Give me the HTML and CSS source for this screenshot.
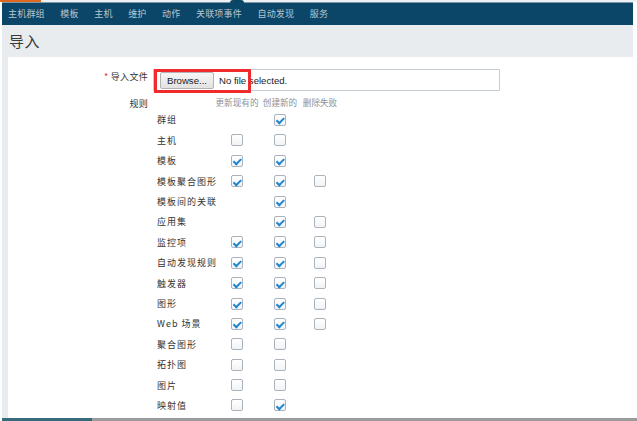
FILE: index.html
```html
<!DOCTYPE html>
<html lang="zh">
<head>
<meta charset="utf-8">
<title>导入</title>
<link rel="stylesheet" href="styles.css">
</head>
<body>
<div class="topline"><div class="accent"></div></div>
<div class="page">
  <nav class="nav">
    <span class="nav-item">主机群组</span>
    <span class="nav-item">模板</span>
    <span class="nav-item">主机</span>
    <span class="nav-item">维护</span>
    <span class="nav-item">动作</span>
    <span class="nav-item">关联项事件</span>
    <span class="nav-item">自动发现</span>
    <span class="nav-item">服务</span>
  </nav>
  <header class="titlebar"><h1 class="title">导入</h1></header>
  <main class="content">
    <div class="form">
      <div class="label label-file"><span class="req">*</span> 导入文件</div>
      <div class="field field-file">
        <div class="filebox">
          <span class="browse">Browse...</span>
          <span class="nofile">No file selected.</span>
        </div>
        <div class="highlight"></div>
      </div>
      <div class="label label-rules">规则</div>
      <div class="field">
        <div class="rules">
          <div class="rname"></div>
          <div class="colhead">更新现有的</div>
          <div class="colhead">创建新的</div>
          <div class="colhead">删除失败</div>

          <div class="rname">群组</div>
          <div class="cell"></div>
          <div class="cell"><span class="cb on"></span></div>
          <div class="cell"></div>

          <div class="rname">主机</div>
          <div class="cell"><span class="cb"></span></div>
          <div class="cell"><span class="cb"></span></div>
          <div class="cell"></div>

          <div class="rname">模板</div>
          <div class="cell"><span class="cb on"></span></div>
          <div class="cell"><span class="cb on"></span></div>
          <div class="cell"></div>

          <div class="rname">模板聚合图形</div>
          <div class="cell"><span class="cb on"></span></div>
          <div class="cell"><span class="cb on"></span></div>
          <div class="cell"><span class="cb"></span></div>

          <div class="rname">模板间的关联</div>
          <div class="cell"></div>
          <div class="cell"><span class="cb on"></span></div>
          <div class="cell"></div>

          <div class="rname">应用集</div>
          <div class="cell"></div>
          <div class="cell"><span class="cb on"></span></div>
          <div class="cell"><span class="cb"></span></div>

          <div class="rname">监控项</div>
          <div class="cell"><span class="cb on"></span></div>
          <div class="cell"><span class="cb on"></span></div>
          <div class="cell"><span class="cb"></span></div>

          <div class="rname">自动发现规则</div>
          <div class="cell"><span class="cb on"></span></div>
          <div class="cell"><span class="cb on"></span></div>
          <div class="cell"><span class="cb"></span></div>

          <div class="rname">触发器</div>
          <div class="cell"><span class="cb on"></span></div>
          <div class="cell"><span class="cb on"></span></div>
          <div class="cell"><span class="cb"></span></div>

          <div class="rname">图形</div>
          <div class="cell"><span class="cb on"></span></div>
          <div class="cell"><span class="cb on"></span></div>
          <div class="cell"><span class="cb"></span></div>

          <div class="rname">Web 场景</div>
          <div class="cell"><span class="cb on"></span></div>
          <div class="cell"><span class="cb on"></span></div>
          <div class="cell"><span class="cb"></span></div>

          <div class="rname">聚合图形</div>
          <div class="cell"><span class="cb"></span></div>
          <div class="cell"><span class="cb"></span></div>
          <div class="cell"></div>

          <div class="rname">拓扑图</div>
          <div class="cell"><span class="cb"></span></div>
          <div class="cell"><span class="cb"></span></div>
          <div class="cell"></div>

          <div class="rname">图片</div>
          <div class="cell"><span class="cb"></span></div>
          <div class="cell"><span class="cb"></span></div>
          <div class="cell"></div>

          <div class="rname">映射值</div>
          <div class="cell"><span class="cb"></span></div>
          <div class="cell"><span class="cb on"></span></div>
          <div class="cell"></div>
        </div>
      </div>
    </div>
  </main>
  <div class="scrollbar"><div class="thumb"></div></div>
</div>
</body>
</html>
```
FILE: styles.css
```css
* { box-sizing: border-box; }
html, body { margin: 0; padding: 0; background: #ffffff; }
body {
  width: 637px;
  height: 421px;
  overflow: hidden;
  font-family: "Noto Sans CJK SC", "Liberation Sans", sans-serif;
  color: #333;
}
.topline {
  height: 2px;
  background: #eef1f3;
}
.topline .accent {
  width: 41px;
  height: 2px;
  background: #e0671f;
}
.page {
  margin-left: 2px;
}
.nav {
  position: relative;
  width: 631px;
  height: 23px;
  background: #0b4567;
  border-top: 1px solid #7f98a8;
  display: flex;
  align-items: center;
  gap: 15.5px;
  padding-left: 6px;
}
.nav::before {
  content: "";
  position: absolute;
  left: 228px;
  top: -3px;
  width: 14px;
  height: 3px;
  background: #0b4567;
  border-radius: 3px 3px 0 0;
}
.nav-item {
  font-size: 9px;
  line-height: 12px;
  color: #b8c6d0;
  letter-spacing: 0.2px;
}
.titlebar {
  width: 631px;
  height: 32px;
  background: #e8ecef;
  display: flex;
  align-items: center;
  padding-left: 7px;
}
.title {
  margin: 0;
  font-size: 15px;
  font-weight: normal;
  color: #3a3a3a;
  letter-spacing: 0.5px;
  line-height: 18px;
}
.content {
  height: 361px;
  border-left: 6px solid #e8ecef;
  background: #fff;
  padding-top: 12px;
  overflow: hidden;
}
.form {
  display: grid;
  grid-template-columns: 140px 1fr;
  column-gap: 5px;
  row-gap: 5px;
}
.label {
  text-align: right;
  font-size: 9px;
  color: #333;
  letter-spacing: 0.3px;
}
.label-file { padding-top: 2px; line-height: 12px; }
.label-rules { padding-top: 1px; line-height: 13px; }
.req { color: #e23030; }
.field { position: relative; }
.filebox {
  width: 347px;
  height: 22px;
  border: 1px solid #c5ccd2;
  display: flex;
  align-items: center;
  padding-left: 6px;
  gap: 5px;
  font-family: "Liberation Sans", Arial, sans-serif;
}
.browse {
  width: 54px;
  height: 17px;
  border: 1px solid #b3b3b3;
  border-radius: 2px;
  background: linear-gradient(#f6f6f6, #e2e2e2);
  font-size: 9.6px;
  line-height: 15px;
  text-align: center;
  color: #222;
}
.nofile {
  font-size: 9.6px;
  color: #222;
}
.highlight {
  position: absolute;
  left: 1px;
  top: 0;
  width: 97px;
  height: 24px;
  border: 3px solid #ef2b2b;
}
.rules {
  display: grid;
  grid-template-columns: 61px 46px 40px 40px;
  grid-template-rows: 13.8px repeat(15, 20.4px);
}
.colhead {
  font-size: 8.6px;
  line-height: 13px;
  color: #8a9098;
  text-align: center;
  white-space: nowrap;
}
.rname {
  padding-left: 4px;
  font-size: 9px;
  letter-spacing: 1px;
  color: #333;
  display: flex;
  align-items: center;
  white-space: nowrap;
}
.cell {
  display: flex;
  align-items: center;
  justify-content: center;
}
.cb {
  display: block;
  width: 12px;
  height: 12px;
  border: 1px solid #aab3bd;
  border-radius: 2px;
  background: linear-gradient(#ffffff, #f1f3f5);
  position: relative;
}
.cb.on::after {
  content: "";
  position: absolute;
  left: 3px;
  top: 1.5px;
  width: 3px;
  height: 5.5px;
  border-right: 2px solid #1f86cf;
  border-bottom: 2px solid #1f86cf;
  transform: rotate(45deg);
}
.scrollbar {
  height: 3px;
  background: #9b9b9b;
  width: 635px;
}
.thumb {
  width: 90px;
  height: 3px;
  background: #356b7d;
}
```
